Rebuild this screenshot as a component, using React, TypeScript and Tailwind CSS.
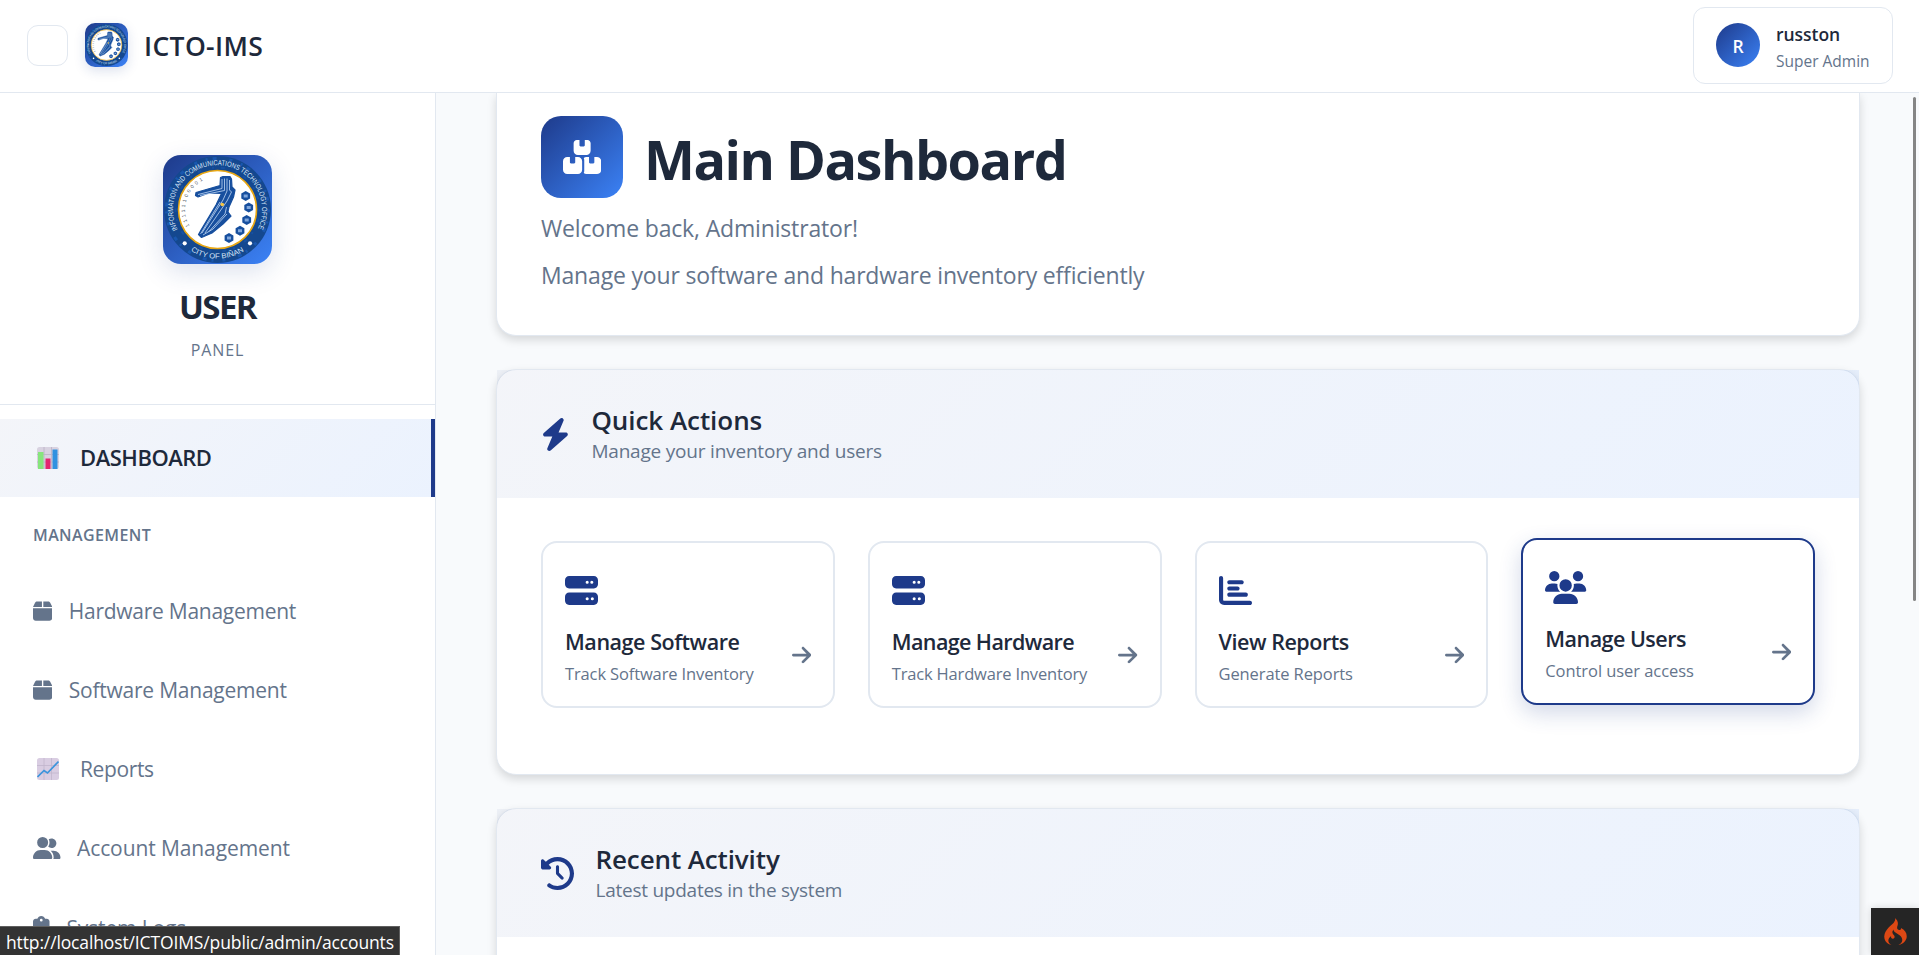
import type { ReactNode } from "react";
import {
  FaArrowRight,
  FaBolt,
  FaChartBar,
  FaClipboardList,
  FaClockRotateLeft,
  FaServer,
  FaUserGroup,
  FaUsers,
} from "react-icons/fa6";
import { SiCodeigniter } from "react-icons/si";

const hexBadges = [
  [82.7, 41],
  [85.7, 52.6],
  [83.7, 65],
  [77, 75.7],
  [66, 83],
];

function Seal({ id, className }: { id: string; className: string }) {
  return (
    <svg viewBox="0 0 109 109" className={className} aria-hidden="true">
      <defs>
        <path id={`${id}-top`} d="M15.1 75.4A44.5 44.5 0 1 1 93.9 75.4" />
        <path id={`${id}-bottom`} d="M24.5 93.5A49.5 49.5 0 0 0 84.5 93.5" />
        <path id={`${id}-bits`} d="M26.5 71A32.5 32.5 0 0 1 43 24.1" />
      </defs>
      <circle cx="54.5" cy="54.5" r="53.5" fill="#14488f" />
      <circle cx="54.5" cy="54.5" r="51" fill="none" stroke="#1d62c4" strokeWidth="3" strokeDasharray="3 9 2 5 4 13" opacity=".6" />
      <circle cx="54.5" cy="54.5" r="42" fill="none" stroke="#1a5ab5" strokeWidth="2" strokeDasharray="2 7 4 11" opacity=".5" />
      <circle cx="54.5" cy="54.5" r="39" fill="#fff" stroke="#e8a713" strokeWidth="1.6" />
      <g fontFamily="Liberation Sans, sans-serif" fill="#dbe8fb">
        <text fontSize="7.3">
          <textPath href={`#${id}-top`} startOffset="1" textLength="179" lengthAdjust="spacingAndGlyphs">
            INFORMATION AND COMMUNICATIONS TECHNOLOGY OFFICE
          </textPath>
        </text>
        <text fontSize="7.3">
          <textPath href={`#${id}-bottom`} startOffset="4" textLength="56" lengthAdjust="spacingAndGlyphs">
            CITY OF BIÑAN
          </textPath>
        </text>
        <text fontSize="5" fill="#4b5563">
          <textPath href={`#${id}-bits`} textLength="53">
            11111100001
          </textPath>
        </text>
      </g>
      <circle cx="21.7" cy="88.3" r="2.1" fill="#fff" />
      <circle cx="87" cy="88.3" r="2.1" fill="#fff" />
      <path
        d="M33 37.5 57 30.5 57.5 22.5 60 21.5H67L68.5 24 69 32 72 35 70.5 42 66 52 65 57 68 61 60 69 49 78 38.5 82.5 35.5 79.5 38 75 53 50 58.5 38.5 46 38 35 42 32.5 40.5Z"
        fill="#174f9e"
        stroke="#174f9e"
        strokeWidth="1.2"
        strokeLinejoin="round"
      />
      <g fill="none" stroke="#c4daf6" strokeWidth=".8">
        <path d="M35 39.5 59 33.5V24" />
        <path d="M37 40.5 61.5 35.5V23.5" />
        <path d="M64 23.5V36L60 45 39 78" />
        <path d="M66.5 25V35L68.5 37 64 46 42 78" />
        <path d="M57 47 37.5 79" />
        <path d="M63.5 52 62 59 46 76.5" />
        <path d="M64 59 50 74 40 80" />
      </g>
      <circle cx="59.3" cy="49.5" r="1.8" fill="#f5c542" />
      {hexBadges.map(([x, y]) => (
        <g key={y} transform={`translate(${x} ${y})`}>
          <path d="M0-5 4.4-2.5V2.5L0 5-4.4 2.5V-2.5Z" fill="#174f9e" />
          <path d="M-2-1.5H2V1.5H-2Z" fill="#7fa6dc" />
        </g>
      ))}
    </svg>
  );
}

function BoxIcon() {
  return (
    <svg viewBox="0 0 448 512" className="h-[22px] w-[19.25px]" fill="currentColor" aria-hidden="true">
      <path d="M50.7 58.5L0 160H208V32H93.7C75.5 32 58.9 42.3 50.7 58.5zM240 160H448L397.3 58.5C389.1 42.3 372.5 32 354.3 32H240V160zm208 32H0V416c0 35.3 28.7 64 64 64H384c35.3 0 64-28.7 64-64V192z" />
    </svg>
  );
}

function BoxesIcon() {
  return (
    <svg viewBox="0 0 576 512" className="h-[34px] w-[38.25px]" fill="currentColor" aria-hidden="true">
      <path d="M248 0H208c-26.5 0-48 21.5-48 48V160c0 35.3 28.7 64 64 64H352c35.3 0 64-28.7 64-64V48c0-26.5-21.5-48-48-48H328V80c0 8.8-7.2 16-16 16H264c-8.8 0-16-7.2-16-16V0zM64 256c-35.3 0-64 28.7-64 64V448c0 35.3 28.7 64 64 64H224c35.3 0 64-28.7 64-64V320c0-35.3-28.7-64-64-64H184v80c0 8.8-7.2 16-16 16H120c-8.8 0-16-7.2-16-16V256H64zM352 512H512c35.3 0 64-28.7 64-64V320c0-35.3-28.7-64-64-64H472v80c0 8.8-7.2 16-16 16H408c-8.8 0-16-7.2-16-16V256H352c-15 0-28.8 5.1-39.7 13.8c4.9 10.4 7.7 22 7.7 34.2V464c0 12.2-2.8 23.8-7.7 34.2C323.2 506.9 337 512 352 512z" />
    </svg>
  );
}

function BarChartEmoji() {
  return (
    <svg viewBox="0 0 22 22" className="ml-1 size-[22px]" aria-hidden="true">
      <rect width="22" height="22" rx="2.5" fill="#d8d2e0" />
      <path d="M0 7.5H22M7 0V22M14.5 0V22M0 15H22" stroke="#bdb4c8" strokeWidth=".9" />
      <rect x="1" y="5" width="5.5" height="17" fill="#86e57c" />
      <rect x="8.5" y="11.5" width="5" height="10.5" fill="#e3266f" />
      <rect x="15.5" y="2.5" width="5" height="19.5" fill="#3191e0" />
    </svg>
  );
}

function LineChartEmoji() {
  return (
    <svg viewBox="0 0 22 22" className="ml-1 size-[22px]" aria-hidden="true">
      <rect width="22" height="22" rx="2.5" fill="#d9cde2" />
      <path d="M0 7.5H22M7 0V22M14.5 0V22M0 15H22" stroke="#c2b5cd" strokeWidth=".8" />
      <path d="M.5 19 7 12.5 10.5 15 21.5 3.5" fill="none" stroke="#3b94dc" strokeWidth="1.7" />
    </svg>
  );
}

const navItems: { label: string; icon: ReactNode; text: string }[] = [
  { label: "Hardware Management", icon: <BoxIcon />, text: "ml-[16.5px] tracking-[-0.26px]" },
  { label: "Software Management", icon: <BoxIcon />, text: "ml-[16.5px] tracking-[-0.23px]" },
  { label: "Reports", icon: <LineChartEmoji />, text: "ml-[21px] tracking-[-0.38px]" },
  { label: "Account Management", icon: <FaUserGroup className="h-[22px] w-[27.5px]" />, text: "ml-[16.5px] tracking-[-0.1px]" },
  { label: "System Logs", icon: <FaClipboardList className="h-[22px] w-[16.5px]" />, text: "mt-px ml-[17px] tracking-[-0.15px]" },
];

const iconClass = "size-[33px]";

const actions = [
  { title: "Manage Software", sub: "Track Software Inventory", icon: <FaServer className={iconClass} />, t: "tracking-[-0.45px]", s: "tracking-[-0.13px]", hover: false },
  { title: "Manage Hardware", sub: "Track Hardware Inventory", icon: <FaServer className={iconClass} />, t: "tracking-[-0.6px]", s: "tracking-[-0.17px]", hover: false },
  { title: "View Reports", sub: "Generate Reports", icon: <FaChartBar className={iconClass} />, t: "tracking-[-0.45px]", s: "tracking-[-0.1px]", hover: false },
  { title: "Manage Users", sub: "Control user access", icon: <FaUsers className="h-[33px] w-[41.25px]" />, t: "tracking-[-0.52px]", s: "tracking-[-0.06px]", hover: true },
];

function SectionHeader({ icon, title, sub, t, s }: { icon: ReactNode; title: string; sub: string; t: string; s: string }) {
  return (
    <div className="flex h-32 items-center gap-[21.5px] bg-[linear-gradient(135deg,rgba(30,58,138,0.05),rgba(59,130,246,0.1))] px-11">
      <div className="text-[#1e3a8a]">{icon}</div>
      <div>
        <h2 className={`text-[26px] leading-8 font-semibold text-[#1e293b] ${t}`}>{title}</h2>
        <p className={`mt-px text-[19px] leading-7 text-[#64748b] ${s}`}>{sub}</p>
      </div>
    </div>
  );
}

const cardClass = "border border-[#e2e8f0] bg-white shadow-[0_4px_10px_rgba(0,0,0,0.14)]";

export default function App() {
  return (
    <div className="relative flex h-[955px] w-full flex-col overflow-hidden bg-[#f8fafc] font-['Open_Sans','Noto_Sans',sans-serif] text-[#1e293b]">
      <header className="z-10 flex h-[93px] shrink-0 items-center justify-between border-b border-[#e2e8f0] bg-white pr-[26px] pl-[27px]">
        <div className="flex items-center">
          <button className="mb-px size-[41px] rounded-[11px] border border-[#e2e8f0]" aria-label="Toggle sidebar" />
          <div className="mb-[2px] ml-[17px] h-11 w-[43px] overflow-hidden rounded-[10px] bg-[linear-gradient(135deg,#1e3a8a,#3b82f6)] shadow-[0_4px_12px_rgba(30,58,138,0.15)]">
            <Seal id="brand" className="size-full" />
          </div>
          <span className="ml-4 text-[26.5px] leading-8 font-semibold tracking-[0.35px]">ICTO-IMS</span>
        </div>
        <div className="mb-px flex h-[77px] w-[200px] items-center rounded-xl border border-[#e2e8f0] pl-[22px]">
          <div className="mb-px flex size-11 items-center justify-center rounded-full bg-[linear-gradient(135deg,#1e3a8a,#3b82f6)] pt-[2px] text-[17.5px] font-semibold text-white">
            R
          </div>
          <div className="mt-[3px] ml-4">
            <div className="text-[17.5px] leading-[26px] font-semibold tracking-[-0.05px]">russton</div>
            <div className="mt-px text-[15.5px] leading-[26px] text-[#64748b]">Super Admin</div>
          </div>
        </div>
      </header>

      <div className="flex min-h-0 flex-1">
        <aside className="w-[436px] shrink-0 overflow-hidden border-r border-[#e2e8f0] bg-white">
          <div className="flex h-[312px] flex-col items-center border-b border-[#e2e8f0] pt-[62px]">
            <div className="size-[109px] shrink-0 overflow-hidden rounded-[18px] bg-[linear-gradient(135deg,#1e3a8a,#3b82f6)] shadow-[0_8px_26px_rgba(30,58,138,0.15)]">
              <Seal id="panel" className="size-full" />
            </div>
            <div className="mt-5 text-[33px] leading-[46px] font-bold tracking-[-1.6px]">USER</div>
            <div className="mt-[8px] text-base leading-6 tracking-[0.9px] text-[#64748b]">PANEL</div>
          </div>
          <nav className="mt-3.5">
            <a className="flex h-[78px] items-center border-r-4 border-[#1e3a8a] bg-[linear-gradient(135deg,rgba(30,58,138,0.05),rgba(59,130,246,0.1))] pl-[33px]">
              <BarChartEmoji />
              <span className="mb-[2px] ml-[21px] text-[22px] leading-8 font-semibold tracking-[-0.48px]">DASHBOARD</span>
            </a>
            <div className="mt-[26px] mb-[25px] pl-[33px] text-base leading-6 font-semibold tracking-[0.39px] text-[#64748b]">MANAGEMENT</div>
            {navItems.map((item) => (
              <a key={item.label} className="mb-px flex h-[78px] items-center pl-[33px] text-[#64748b]">
                {item.icon}
                <span className={`text-[21px] leading-8 ${item.text}`}>{item.label}</span>
              </a>
            ))}
          </nav>
        </aside>

        <main className="min-w-0 flex-1 overflow-hidden pr-[59px] pl-[60px]">
          <section className={`h-[243px] rounded-b-[20px] border-t-0 px-11 pt-[23px] ${cardClass}`}>
            <div className="flex h-[82px] items-center">
              <div className="flex size-[82px] items-center justify-center rounded-[20px] bg-[linear-gradient(135deg,#1e3a8a,#3b82f6)] text-white">
                <BoxesIcon />
              </div>
              <h1 className="mt-1 ml-[21px] text-[54px] leading-[64px] font-bold tracking-[-1.5px]">Main Dashboard</h1>
            </div>
            <p className="mt-[15px] text-[23px] leading-[30px] tracking-[-0.16px] text-[#64748b]">Welcome back, Administrator!</p>
            <p className="mt-[17px] text-[23px] leading-[30px] tracking-[-0.18px] text-[#64748b]">
              Manage your software and hardware inventory efficiently
            </p>
          </section>

          <section className={`mt-[33px] h-[406px] rounded-[20px] ${cardClass}`}>
            <SectionHeader
              icon={<FaBolt className="h-[33px] w-[28.9px]" />}
              title="Quick Actions"
              sub="Manage your inventory and users"
              t="tracking-[-0.05px]"
              s="tracking-[-0.2px]"
            />
            <div className="grid grid-cols-4 gap-[33px] px-11 pt-[43px]">
              {actions.map((a) => (
                <a
                  key={a.title}
                  className={`h-[167px] rounded-2xl border-2 bg-white px-[22px] pt-[31px] ${
                    a.hover ? "-translate-y-[3px] border-[#1e3a8a] shadow-[0_8px_22px_rgba(30,58,138,0.2)]" : "border-[#e2e8f0]"
                  }`}
                >
                  <div className="text-[#1e3a8a]">{a.icon}</div>
                  <div className="mt-[19px] flex items-center justify-between">
                    <div>
                      <h3 className={`text-[21.5px] leading-[31px] font-semibold ${a.t}`}>{a.title}</h3>
                      <p className={`mt-[5px] text-[16.5px] leading-6 text-[#64748b] ${a.s}`}>{a.sub}</p>
                    </div>
                    <FaArrowRight className="mb-[3px] h-[22px] w-[19.25px] text-[#64748b]" />
                  </div>
                </a>
              ))}
            </div>
          </section>

          <section className={`mt-[33px] h-[406px] rounded-[20px] ${cardClass}`}>
            <SectionHeader
              icon={<FaClockRotateLeft className="size-[33px]" />}
              title="Recent Activity"
              sub="Latest updates in the system"
              t="tracking-[-0.12px]"
              s="tracking-[-0.25px]"
            />
          </section>
        </main>
      </div>

      <div className="absolute top-[97px] right-[3px] h-[504px] w-[3px] rounded-full bg-[#858585]" />
      <div className="absolute right-0 bottom-0 z-20 flex h-[47px] w-12 items-center justify-center bg-[#252525] shadow-[0_0_8px_rgba(0,0,0,0.15)]">
        <SiCodeigniter className="size-[27px] text-[#dd4814]" />
      </div>
      <div className="absolute bottom-0 left-0 z-20 h-[29px] w-[400px] border-t border-r border-[#5f5f5f] bg-[#333] pl-[6px] text-[17.5px] leading-[31px] tracking-[-0.13px] whitespace-nowrap text-white">
        http://localhost/ICTOIMS/public/admin/accounts
      </div>
    </div>
  );
}
